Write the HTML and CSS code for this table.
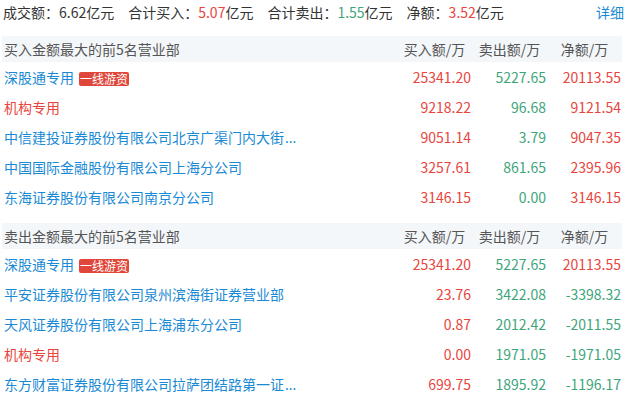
FILE: index.html
```html
<!DOCTYPE html>
<html lang="zh-CN">
<head>
<meta charset="utf-8">
<link rel="stylesheet" href="styles.css">
</head>
<body>
<div class="wrap">
  <div class="summary">
    <div class="items">
      <span class="item">成交额：<span class="val">6.62</span>亿元</span>
      <span class="item">合计买入：<span class="red">5.07</span>亿元</span>
      <span class="item">合计卖出：<span class="green">1.55</span>亿元</span>
      <span class="item">净额：<span class="red">3.52</span>亿元</span>
    </div>
    <a class="detail">详细</a>
  </div>

  <div class="section">
    <div class="row head">
      <div class="name">买入金额最大的前5名营业部</div>
      <div class="num">买入额/万</div>
      <div class="num">卖出额/万</div>
      <div class="num">净额/万</div>
    </div>
    <div class="row">
      <div class="name"><span class="txt blue">深股通专用</span><span class="tag">一线游资</span></div>
      <div class="num red">25341.20</div><div class="num green">5227.65</div><div class="num red">20113.55</div>
    </div>
    <div class="row">
      <div class="name"><span class="txt red">机构专用</span></div>
      <div class="num red">9218.22</div><div class="num green">96.68</div><div class="num red">9121.54</div>
    </div>
    <div class="row">
      <div class="name"><span class="txt blue" title="中信建投证券股份有限公司北京广渠门内大街证券营业部">中信建投证券股份有限公司北京广渠门内大街<span class="dots">...</span></span></div>
      <div class="num red">9051.14</div><div class="num green">3.79</div><div class="num red">9047.35</div>
    </div>
    <div class="row">
      <div class="name"><span class="txt blue">中国国际金融股份有限公司上海分公司</span></div>
      <div class="num red">3257.61</div><div class="num green">861.65</div><div class="num red">2395.96</div>
    </div>
    <div class="row">
      <div class="name"><span class="txt blue">东海证券股份有限公司南京分公司</span></div>
      <div class="num red">3146.15</div><div class="num green">0.00</div><div class="num red">3146.15</div>
    </div>
  </div>

  <div class="section second">
    <div class="row head">
      <div class="name">卖出金额最大的前5名营业部</div>
      <div class="num">买入额/万</div>
      <div class="num">卖出额/万</div>
      <div class="num">净额/万</div>
    </div>
    <div class="row">
      <div class="name"><span class="txt blue">深股通专用</span><span class="tag">一线游资</span></div>
      <div class="num red">25341.20</div><div class="num green">5227.65</div><div class="num red">20113.55</div>
    </div>
    <div class="row">
      <div class="name"><span class="txt blue">平安证券股份有限公司泉州滨海街证券营业部</span></div>
      <div class="num red">23.76</div><div class="num green">3422.08</div><div class="num green">-3398.32</div>
    </div>
    <div class="row">
      <div class="name"><span class="txt blue">天风证券股份有限公司上海浦东分公司</span></div>
      <div class="num red">0.87</div><div class="num green">2012.42</div><div class="num green">-2011.55</div>
    </div>
    <div class="row">
      <div class="name"><span class="txt red">机构专用</span></div>
      <div class="num red">0.00</div><div class="num green">1971.05</div><div class="num green">-1971.05</div>
    </div>
    <div class="row">
      <div class="name"><span class="txt blue" title="东方财富证券股份有限公司拉萨团结路第一证券营业部">东方财富证券股份有限公司拉萨团结路第一证<span class="dots">...</span></span></div>
      <div class="num red">699.75</div><div class="num green">1895.92</div><div class="num green">-1196.17</div>
    </div>
  </div>
</div>
</body>
</html>
```
FILE: styles.css
```css
* { box-sizing: border-box; }
html, body { margin: 0; padding: 0; background: #fff; }
body {
  font-family: "Noto Sans CJK SC", "Noto Sans", sans-serif;
  font-size: 14px;
  color: #333;
}
.wrap {
  width: 620px;
  margin-left: 2px;
}
.summary {
  display: flex;
  justify-content: space-between;
  align-items: center;
  height: 24px;
  line-height: 24px;
  margin-bottom: 12px;
  padding-left: 1px;
}
.items { display: flex; gap: 14px; }
.detail { color: #1a8ad4; cursor: pointer; margin-right: -2px; }
.red { color: #e8453c; }
.green { color: #3ea57b; }
.blue { color: #1a8ad4; }
.section { display: flex; flex-direction: column; }
.second { margin-top: 11px; }
.row {
  display: flex;
  align-items: center;
  height: 30px;
}
.row.head {
  height: 26px;
  background: #f4f7fa;
  color: #555;
}
.name {
  flex: 1;
  display: flex;
  align-items: center;
  padding-left: 2px;
  min-width: 0;
}
.txt {
  white-space: nowrap;
}
.dots {
  font-family: "Noto Sans", sans-serif;
  margin-left: 1px;
}
.tag {
  margin-left: 5px;
  margin-top: 3px;
  background: #e0463a;
  color: #fff;
  font-size: 12px;
  line-height: 14px;
  height: 14px;
  padding: 0 1px;
  border-radius: 2px;
}
.num {
  width: 75px;
  text-align: right;
  padding-right: 1px;
}
.head .num {
  text-align: center;
  padding-right: 0;
}
```
